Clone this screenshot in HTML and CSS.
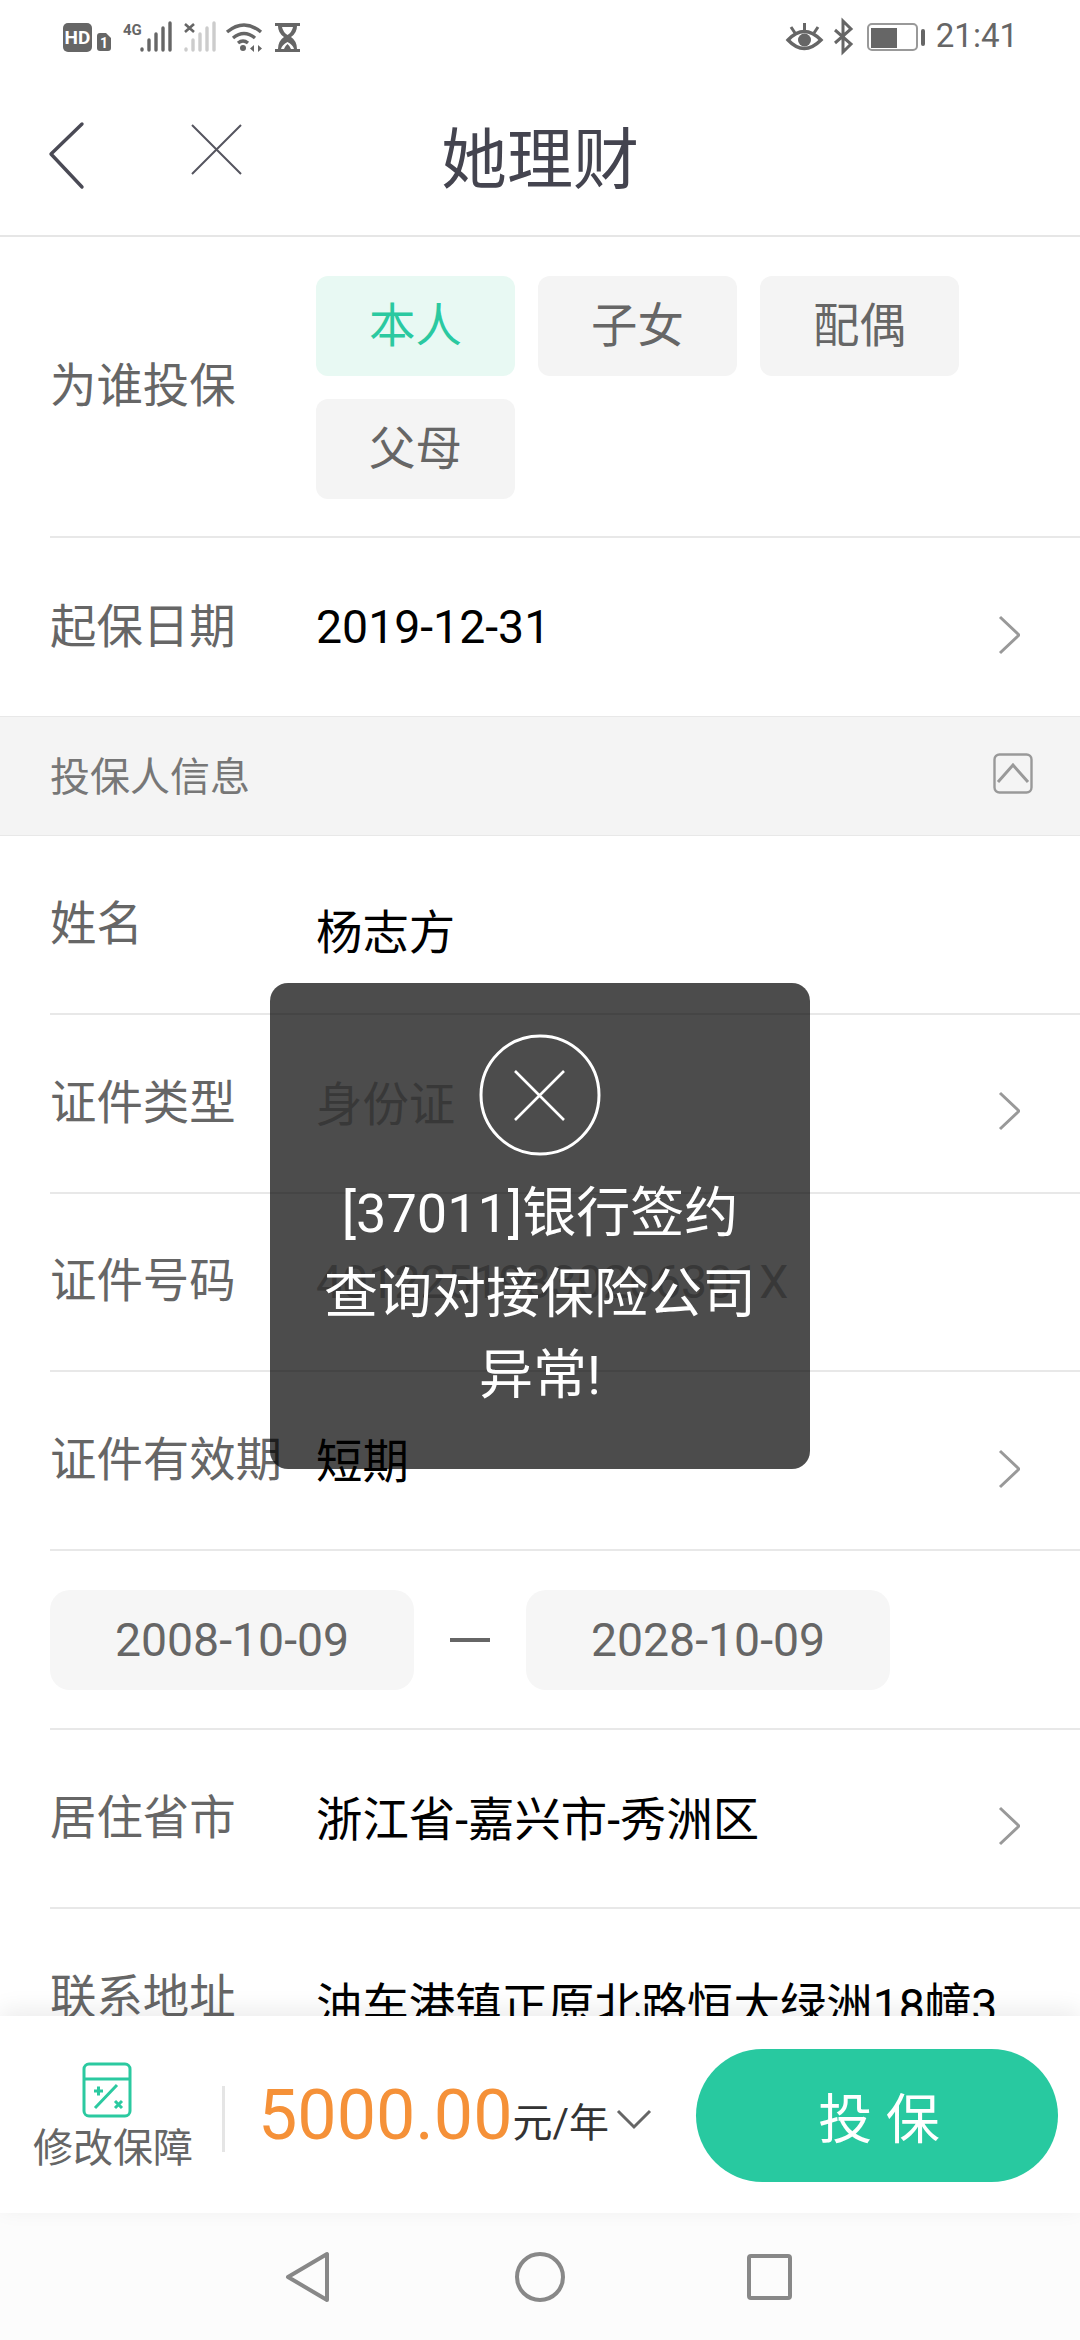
FILE: index.html
```html
<!DOCTYPE html>
<html lang="zh-CN">
<head>
    <meta charset="UTF-8">
    <meta name="viewport" content="width=device-width, initial-scale=1.0">
    <title>她理财</title>
    <link rel="stylesheet" href="styles.css">
</head>
<body>
    <div class="page">
        <div class="status-bar">
            <svg class="status-left" width="240" height="70" viewBox="60 0 240 70">
                <rect x="63" y="23" width="29" height="29" rx="5" fill="#666"/>
                <text x="77.5" y="43.5" class="hd-text">HD</text>
                <path d="M97 36q0-3 3-3h6l5 5v10q0 3-3 3h-8q-3 0-3-3z" fill="#666"/>
                <text x="104" y="48" class="sim-text">1</text>
                <text x="123" y="35" class="net-text">4G</text>
                <g stroke="#666" stroke-width="3.4" stroke-linecap="round">
                    <path d="M142 50v-1M149 50v-10M156 50v-16M163 50v-22M170 50v-27"/>
                </g>
                <path d="M185 24l9 8M194 24l-9 8" stroke="#666" stroke-width="2.6"/>
                <g stroke="#ccc" stroke-width="3.4" stroke-linecap="round">
                    <path d="M186 50v-1M193 50v-10M200 50v-16M207 50v-22M214 50v-27"/>
                </g>
                <g fill="none" stroke="#666" stroke-width="3.4">
                    <path d="M227 32q17-14 34 0"/>
                    <path d="M233 38q11-9 22 0"/>
                    <path d="M238 43q5-4 10 0"/>
                </g>
                <circle cx="243" cy="48" r="3" fill="#666"/>
                <path d="M254 45v7l-4-3.500zM258 45v7l4-3.500z" fill="#666"/>
                <path d="M275 23h25v3h-3q0 7-6 11 6 4 6 12h3v3h-25v-3h3q0-8 6-12-6-4-6-11h-3z" fill="#666"/>
                <path d="M282 27h11q-1 5-5.500 8-4.500-3-5.500-8zM281 49q1-4 6.500-7 5.500 3 6.500 7z" fill="#fff"/>
                <path d="M284 49q1-3 3.500-5 2.500 2 3.500 5z" fill="#666"/>
            </svg>
            <div class="status-right">
                <svg width="142" height="70" viewBox="785 0 142 70">
                    <path d="M788 40q16-17 33 0-17 17-33 0z" fill="none" stroke="#666" stroke-width="3.400"/>
                    <circle cx="804.500" cy="40" r="6.500" fill="#666"/>
                    <path d="M804.500 23v7M791 27l4 6M818 27l-4 6" stroke="#666" stroke-width="3"/>
                    <path d="M835 30l16 14-8 8V21l8 8-16 14" fill="none" stroke="#666" stroke-width="3"/>
                    <rect x="868" y="24" width="49" height="26" rx="4" fill="none" stroke="#999" stroke-width="2"/>
                    <rect x="871" y="28" width="26" height="20" fill="#666"/>
                    <rect x="921" y="29" width="4" height="17" rx="2" fill="#666"/>
                </svg>
                <span class="clock">21:41</span>
            </div>
        </div>

        <div class="nav-bar">
            <div class="nav-icons">
                <svg width="100" height="80" viewBox="40 110 100 80"><path d="M82 124l-31 30 31 33" fill="none" stroke="#4a4a55" stroke-width="3.400" stroke-linecap="round" stroke-linejoin="round"/></svg>
                <svg width="60" height="60" viewBox="187 126 60 60"><path d="M192 131l49 49M241 131l-49 49" stroke="#55555f" stroke-width="2"/></svg>
            </div>
            <div class="nav-title">她理财</div>
        </div>

        <div class="content">
            <div class="row row-chips">
                <div class="label">为谁投保</div>
                <div class="chips">
                    <div class="chip chip-active">本人</div>
                    <div class="chip">子女</div>
                    <div class="chip">配偶</div>
                    <div class="chip">父母</div>
                </div>
            </div>
            <div class="row row-last">
                <div class="label">起保日期</div>
                <div class="value">2019-12-31</div>
                <svg class="arrow" width="22" height="40" viewBox="0 0 22 40"><path d="M2 2l19 18L2 38" fill="none" stroke="#999" stroke-width="3"/></svg>
            </div>
            <div class="section-head">
                <span class="section-title">投保人信息</span>
                <svg class="section-icon" width="40" height="41" viewBox="0 0 40 41"><rect x="1.500" y="1.500" width="37" height="38" rx="5" fill="none" stroke="#999" stroke-width="2.400"/><path d="M5 29l15-17 15 17" fill="none" stroke="#999" stroke-width="3"/></svg>
            </div>
            <div class="row">
                <div class="label">姓名</div>
                <div class="value value-input">杨志方</div>
            </div>
            <div class="row">
                <div class="label">证件类型</div>
                <div class="value value-cjk value-muted">身份证</div>
                <svg class="arrow" width="22" height="40" viewBox="0 0 22 40"><path d="M2 2l19 18L2 38" fill="none" stroke="#999" stroke-width="3"/></svg>
            </div>
            <div class="row">
                <div class="label">证件号码</div>
                <div class="value value-muted">40122519830206301X</div>
            </div>
            <div class="row">
                <div class="label">证件有效期</div>
                <div class="value value-cjk">短期</div>
                <svg class="arrow" width="22" height="40" viewBox="0 0 22 40"><path d="M2 2l19 18L2 38" fill="none" stroke="#999" stroke-width="3"/></svg>
            </div>
            <div class="row row-dates">
                <div class="date-chip">2008-10-09</div>
                <div class="date-dash"></div>
                <div class="date-chip">2028-10-09</div>
            </div>
            <div class="row">
                <div class="label">居住省市</div>
                <div class="value value-cjk">浙江省-嘉兴市-秀洲区</div>
                <svg class="arrow" width="22" height="40" viewBox="0 0 22 40"><path d="M2 2l19 18L2 38" fill="none" stroke="#999" stroke-width="3"/></svg>
            </div>
            <div class="row">
                <div class="label">联系地址</div>
                <div class="value value-input">油车港镇正原北路恒大绿洲18幢3</div>
            </div>
        </div>

        <div class="footer">
            <div class="edit">
                <svg class="edit-icon" width="50" height="56" viewBox="0 0 50 56">
                    <rect x="2" y="2" width="46" height="52" rx="5" fill="none" stroke="#2bc9a0" stroke-width="3"/>
                    <path d="M2 17h46" stroke="#2bc9a0" stroke-width="3"/>
                    <path d="M12 29h9M16.500 24.500v9M13 46l22-23M33 39l7 7M40 39l-7 7" stroke="#2bc9a0" stroke-width="3"/>
                </svg>
                <div class="edit-text">修改保障</div>
            </div>
            <div class="divider"></div>
            <div class="price">5000.00</div>
            <div class="unit">元/年</div>
            <svg class="unit-arrow" width="36" height="22" viewBox="0 0 36 22"><path d="M2 3l16 16L34 3" fill="none" stroke="#666" stroke-width="3"/></svg>
            <div class="buy-btn">投 保</div>
        </div>

        <div class="system-nav">
            <svg width="1080" height="127" viewBox="0 2213 1080 127">
                <path d="M288 2277l39-23v46z" fill="none" stroke="#888" stroke-width="4" stroke-linejoin="round"/>
                <circle cx="540" cy="2277" r="23" fill="none" stroke="#888" stroke-width="4"/>
                <rect x="749" y="2256" width="41" height="42" rx="2" fill="none" stroke="#888" stroke-width="4"/>
            </svg>
        </div>

        <div class="toast">
            <svg class="toast-icon" width="122" height="122" viewBox="0 0 122 122">
                <circle cx="61" cy="61" r="59" fill="none" stroke="#fff" stroke-width="3"/>
                <path d="M36 37l49 49M85 37l-49 49" stroke="#fff" stroke-width="2.600"/>
            </svg>
            <div class="toast-text">[37011]银行签约<br>查询对接保险公司<br>异常!</div>
        </div>
    </div>
</body>
</html>
```

FILE: styles.css
```css
* {
    box-sizing: border-box;
}

body {
    margin: 0;
    background-color: #fff;
    font-family: Roboto, "Noto Sans CJK SC", sans-serif;
}

svg {
    display: block;
    flex-shrink: 0;
}

.page {
    position: relative;
    display: flex;
    flex-direction: column;
    width: 1080px;
    height: 2340px;
    overflow: hidden;
}

/* status bar */
.status-bar {
    display: flex;
    justify-content: space-between;
    align-items: center;
    height: 70px;
    padding-left: 60px;
    padding-right: 62px;
}

.status-right {
    display: flex;
    align-items: center;
    gap: 9px;
}

.clock {
    font-size: 33px;
    color: #666;
}

.hd-text {
    font-family: Roboto, sans-serif;
    font-size: 19px;
    font-weight: 700;
    fill: #fff;
    text-anchor: middle;
}

.sim-text {
    font-family: Roboto, sans-serif;
    font-size: 14px;
    font-weight: 700;
    fill: #fff;
    text-anchor: middle;
}

.net-text {
    font-family: Roboto, sans-serif;
    font-size: 15px;
    font-weight: 700;
    fill: #666;
}

/* nav */
.nav-bar {
    position: relative;
    display: flex;
    justify-content: center;
    align-items: center;
    height: 167px;
    border-bottom: 2px solid #e6e6e6;
}

.nav-icons {
    position: absolute;
    left: 40px;
    top: 40px;
    display: flex;
    align-items: center;
    gap: 47px;
}

.nav-title {
    margin-top: 2px;
    font-size: 66px;
    color: #44444f;
}

/* form rows */
.content {
    flex: 1;
    min-height: 0;
    overflow: hidden;
}

.row {
    display: flex;
    align-items: center;
    height: 178.8px;
    margin-left: 50px;
    border-bottom: 2px solid #e8e8e8;
}

.row-chips {
    height: 301px;
}

.row-last {
    height: 178px;
    border-bottom: none;
}

.label {
    width: 266px;
    flex-shrink: 0;
    margin-bottom: 10px;
    font-size: 46.4px;
    color: #666;
    white-space: nowrap;
}

.value {
    font-size: 46.4px;
    color: #000;
    white-space: nowrap;
}

.value-cjk {
    margin-bottom: 6px;
}

.value-input {
    margin-top: 8px;
}

.value-muted {
    color: #bbb;
}

.arrow {
    margin-left: auto;
    margin-right: 60px;
    margin-top: 16px;
}

.chips {
    display: flex;
    flex-wrap: wrap;
    gap: 23px;
    margin-top: 2px;
}

.chip {
    display: flex;
    justify-content: center;
    align-items: center;
    width: 199px;
    height: 100px;
    padding-bottom: 10px;
    background-color: #f4f4f4;
    border-radius: 12px;
    font-size: 46.4px;
    color: #666;
}

.chip-active {
    background-color: #e8f9f3;
    color: #2bc9a0;
}

.section-head {
    display: flex;
    justify-content: space-between;
    align-items: center;
    height: 120px;
    padding-left: 50px;
    padding-right: 47px;
    background-color: #f4f4f4;
    border-top: 1px solid #e8e8e8;
    border-bottom: 1px solid #e8e8e8;
    font-size: 40px;
    color: #777;
}

.section-title {
    margin-bottom: 5px;
}

.section-icon {
    margin-bottom: 6px;
}

.date-chip {
    display: flex;
    justify-content: center;
    align-items: center;
    width: 364px;
    height: 100px;
    background-color: #f6f6f6;
    border-radius: 20px;
    font-size: 46.4px;
    color: #666;
}

.date-dash {
    width: 40px;
    height: 4px;
    margin: 0 36px;
    background-color: #666;
}

/* bottom bar */
.footer {
    position: relative;
    display: flex;
    align-items: center;
    flex-shrink: 0;
    height: 197px;
    padding-left: 34px;
    background-color: #fff;
    box-shadow: 0 -6px 22px rgba(0, 0, 0, 0.08);
}

.edit {
    display: flex;
    flex-direction: column;
    align-items: center;
    width: 158px;
    padding-top: 6px;
}

.edit-icon {
    margin-right: 12px;
}

.edit-text {
    font-size: 40px;
    line-height: 50px;
    margin-top: 6px;
    color: #666;
    white-space: nowrap;
}

.divider {
    width: 3px;
    height: 66px;
    margin-left: 30px;
    margin-top: 8px;
    background-color: #e5e5e5;
}

.price {
    margin-left: 33px;
    font-size: 70px;
    color: #f59138;
}

.unit {
    margin-top: 10px;
    font-size: 40px;
    color: #333;
}

.unit-arrow {
    margin-left: 7px;
    margin-top: 8px;
}

.buy-btn {
    display: flex;
    justify-content: center;
    align-items: center;
    width: 362px;
    height: 133px;
    margin-left: auto;
    margin-right: 22px;
    margin-top: 2px;
    padding-left: 4px;
    background-color: #28c9a0;
    border-radius: 67px;
    font-size: 54px;
    color: #fff;
}

.system-nav {
    flex-shrink: 0;
    height: 127px;
    background-color: #fcfcfc;
}

/* toast */
.toast {
    position: absolute;
    left: 270px;
    top: 983px;
    display: flex;
    flex-direction: column;
    align-items: center;
    width: 540px;
    height: 486px;
    padding-top: 51px;
    background-color: rgba(0, 0, 0, 0.7);
    border-radius: 18px;
}

.toast-text {
    margin-top: 17px;
    font-size: 54px;
    line-height: 81px;
    color: #fff;
    text-align: center;
    white-space: nowrap;
}
```
